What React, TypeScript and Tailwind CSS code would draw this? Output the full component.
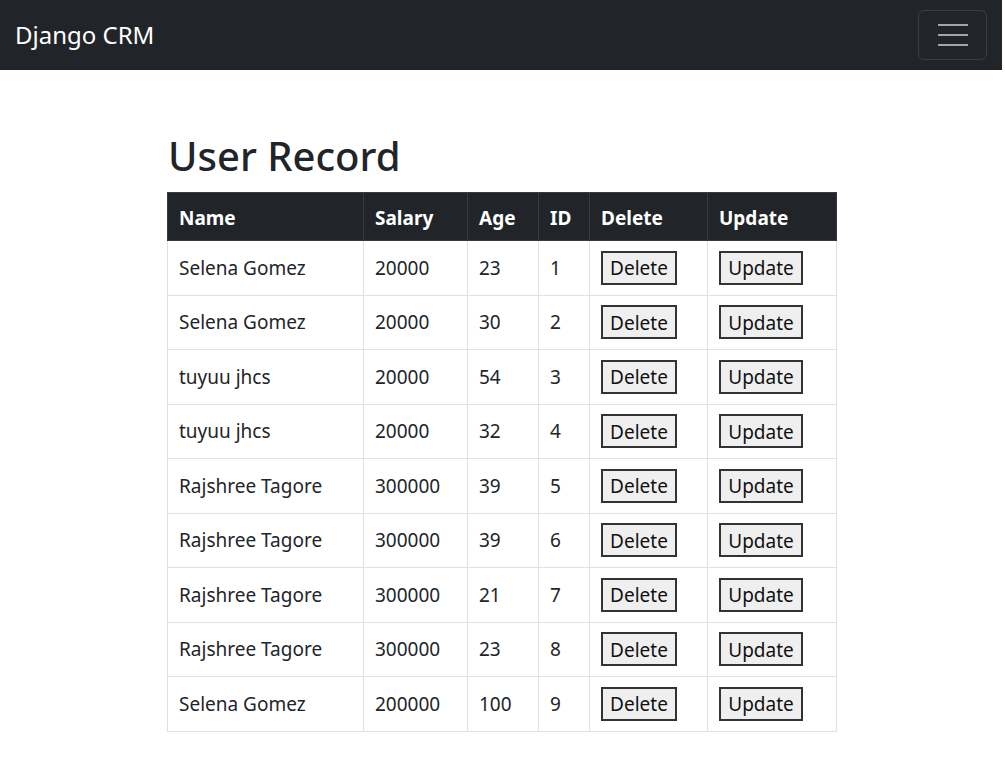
import React from 'react';

const records = [
  { name: 'Selena Gomez', salary: '20000', age: '23', id: '1' },
  { name: 'Selena Gomez', salary: '20000', age: '30', id: '2' },
  { name: 'tuyuu jhcs', salary: '20000', age: '54', id: '3' },
  { name: 'tuyuu jhcs', salary: '20000', age: '32', id: '4' },
  { name: 'Rajshree Tagore', salary: '300000', age: '39', id: '5' },
  { name: 'Rajshree Tagore', salary: '300000', age: '39', id: '6' },
  { name: 'Rajshree Tagore', salary: '300000', age: '21', id: '7' },
  { name: 'Rajshree Tagore', salary: '300000', age: '23', id: '8' },
  { name: 'Selena Gomez', salary: '200000', age: '100', id: '9' },
];

const Navbar = () => (
  <nav className="h-[70px] w-[1002px] bg-[#212529] flex items-center justify-between pl-[15px] pr-[15px]">
    <span className="text-white text-[24px] leading-none">Django CRM</span>
    <button className="w-[69px] h-[50px] rounded-[6px] border border-[#3a3e43] flex flex-col items-center justify-center gap-[8px]">
      <span className="block w-[30px] h-[2px] bg-[#a3a4a6]" />
      <span className="block w-[30px] h-[2px] bg-[#a3a4a6]" />
      <span className="block w-[30px] h-[2px] bg-[#a3a4a6]" />
    </button>
  </nav>
);

const cell = 'border border-[#dee2e6] px-[11px] h-[54.5px] align-middle';
const head = 'border border-[#373b3e] px-[11px] h-[48px] align-middle text-left font-bold pt-[3px]';
const btn = 'border-2 border-[#333] bg-[#efefef] h-[34px] text-[19px] leading-none text-[#111] pt-[2px]';

export default function App() {
  return (
    <div className="min-h-[758px] bg-white text-[#212529]" style={{ fontFamily: '"Noto Sans", "Open Sans", sans-serif' }}>
      <Navbar />
      <main className="pl-[167px] pt-[66px]">
        <h1 className="text-[40px] font-medium leading-none mb-[16px] pl-[1px]">User Record</h1>
        <table className="border-collapse text-[19px]">
          <thead>
            <tr className="bg-[#212529] text-white">
              <th className={`${head} w-[196px]`}>Name</th>
              <th className={`${head} w-[104px]`}>Salary</th>
              <th className={`${head} w-[71px]`}>Age</th>
              <th className={`${head} w-[51px]`}>ID</th>
              <th className={`${head} w-[118px]`}>Delete</th>
              <th className={`${head} w-[129px]`}>Update</th>
            </tr>
          </thead>
          <tbody>
            {records.map((r) => (
              <tr key={r.id}>
                <td className={cell}>{r.name}</td>
                <td className={cell}>{r.salary}</td>
                <td className={cell}>{r.age}</td>
                <td className={cell}>{r.id}</td>
                <td className={cell}>
                  <button className={`${btn} w-[76px]`}>Delete</button>
                </td>
                <td className={cell}>
                  <button className={`${btn} w-[84px]`}>Update</button>
                </td>
              </tr>
            ))}
          </tbody>
        </table>
      </main>
    </div>
  );
}
